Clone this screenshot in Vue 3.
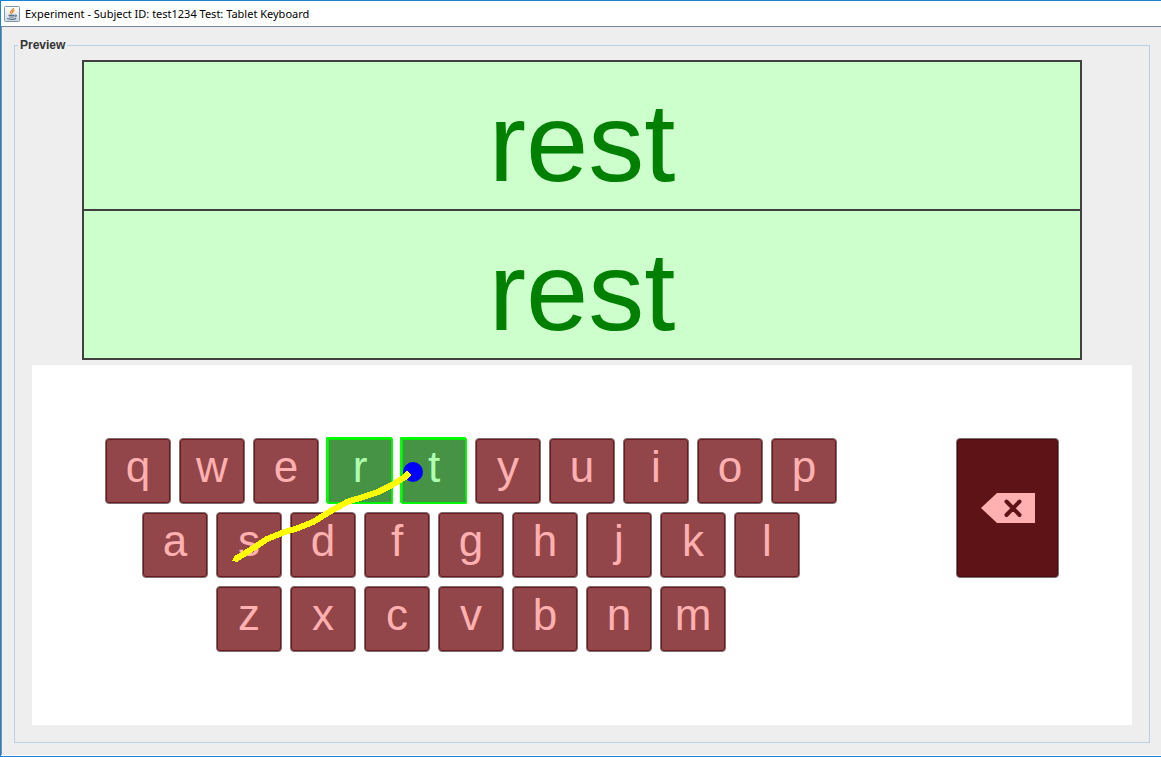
<script setup>
const phrases = [
  { id: 'target', label: 'Target word', text: 'rest' },
  { id: 'typed', label: 'Typed word', text: 'rest' },
]
const rows = ['qwertyuiop', 'asdfghjkl', 'zxcvbnm'].map((r) => r.split(''))
const active = ['r', 't']
</script>

<template>
  <div class="window">
    <header class="titlebar">
      <svg class="java" viewBox="0 0 16 16" aria-hidden="true">
        <defs>
          <linearGradient id="tile" x1="0" y1="0" x2="0" y2="1">
            <stop offset="0" stop-color="#ffffff" />
            <stop offset="1" stop-color="#cfd8e0" />
          </linearGradient>
        </defs>
        <rect x=".5" y=".5" width="15" height="15" rx="1" fill="url(#tile)" stroke="#8196a8" />
        <path d="M9.5 2C9.5 4 6 4.6 6.5 6.5C6.7 7.3 7.5 7.8 7.6 8.4M10.5 4.4C8.6 5.2 8 6 8.8 7.2" fill="none" stroke="#e8882c" stroke-width="1.4" />
        <path d="M4.5 9.3H10.5M5 11H10M10.8 9.1C13 8.6 12.8 10.8 10.6 11M3.2 12.6C5 13.6 10.5 13.6 12.2 12.5" fill="none" stroke="#53718c" stroke-width="1.2" />
      </svg>
      <h1>Experiment - Subject ID: test1234 Test: Tablet Keyboard</h1>
    </header>
    <main class="body">
      <fieldset class="preview">
        <legend>Preview</legend>
        <div class="words">
          <output v-for="p in phrases" :key="p.id" class="word" :aria-label="p.label">{{ p.text }}</output>
        </div>
        <section class="board" aria-label="Tablet keyboard">
          <div class="letters">
            <div v-for="(row, i) in rows" :key="i" class="row" :class="'row-' + i">
              <button v-for="k in row" :key="k" type="button" class="key" :class="{ active: active.includes(k) }">{{ k }}</button>
            </div>
          </div>
          <button type="button" class="key erase" aria-label="Backspace">
            <svg viewBox="0 0 54 30" width="54" height="30" aria-hidden="true">
              <path d="M0 15L16 0H54V30H16Z" fill="#ffb0b0" />
              <path d="M25.5 8.5L38.5 22M38.5 8.5L25.5 22" stroke="#5e1416" stroke-width="4" stroke-linecap="round" />
            </svg>
          </button>
          <svg class="trace" viewBox="0 0 1100 360" width="1100" height="360" aria-hidden="true">
            <circle cx="381" cy="107" r="10" fill="#0000ff" />
            <path d="M204 194L223 182L235 174L250 168L266 163L281 157L299 146L315 137L331 132L346 127L360 120L373 112L377 108" fill="none" stroke="#ffff00" stroke-width="6" stroke-linejoin="round" shape-rendering="crispEdges" />
            <path d="M200 196L203 190L211 191L205 197Z" fill="#ffff00" shape-rendering="crispEdges" />
          </svg>
        </section>
      </fieldset>
    </main>
  </div>
</template>

<style>
body {
  margin: 0;
  background: #eeeeee;
}
</style>

<style scoped>
.window {
  box-sizing: border-box;
  min-height: 100vh;
  display: flex;
  flex-direction: column;
  border: 1px solid #1883d7;
  border-right: 0;
  background: #ffffff;
}
.titlebar {
  display: flex;
  align-items: center;
  gap: 5px;
  height: 25px;
  padding-left: 3px;
  border-bottom: 1px solid #758699;
}
.java {
  width: 16px;
  height: 16px;
}
h1 {
  margin: 0;
  font: 400 11px/16px "Noto Sans", sans-serif;
  color: #000000;
}
.body {
  flex: 1;
  display: flex;
  margin-bottom: 1px;
  padding: 12px 11px 12px 12px;
  border-left: 1px solid #8a8f96;
  background: #eeeeee;
}
.preview {
  flex: 1;
  min-width: 0;
  margin: 0;
  padding: 0 17px 17px;
  border: 1px solid #b8cfe5;
}
legend {
  margin-left: -14px;
  padding: 0 2px;
  font: 700 12px/13px "Liberation Sans", Arial, sans-serif;
  color: #333333;
}
.words {
  box-sizing: border-box;
  max-width: 1000px;
  margin: 8px auto 0;
  border: 2px solid #404040;
  background: #ccffcc;
}
.word {
  display: block;
  height: 147px;
  text-align: center;
  font: 112px/162px "Liberation Sans", Arial, sans-serif;
  color: #008000;
}
.word + .word {
  border-top: 2px solid #404040;
}
.board {
  position: relative;
  box-sizing: border-box;
  display: flex;
  justify-content: space-between;
  align-items: flex-start;
  max-width: 1100px;
  height: 360px;
  margin: 5px auto 0;
  padding: 73px 73px 0;
  background: #ffffff;
}
.letters {
  display: grid;
  gap: 8px;
}
.row {
  display: flex;
  gap: 8px;
}
.row-1 {
  padding-left: 37px;
}
.row-2 {
  padding-left: 111px;
}
.key {
  box-sizing: border-box;
  width: 66px;
  height: 66px;
  padding: 0 0 8px;
  border: 1px solid #7d7172;
  border-radius: 4px;
  box-shadow: inset 0 0 0 1px #6a1a1e;
  background: #934649;
  font: 44px/56px "Liberation Sans", Arial, sans-serif;
  text-align: center;
  color: #ffb0b0;
}
.key.active {
  border: 1px solid #00ff00;
  border-radius: 1px;
  box-shadow: -1px -1px 0 #00ff00, inset 0 0 0 1px #08e60c;
  background: #469346;
  color: #b0ffb0;
}
.key.erase {
  display: flex;
  justify-content: center;
  align-items: center;
  width: 103px;
  height: 140px;
  padding: 0;
  background: #5e1416;
  box-shadow: inset 0 0 0 1px #4a0a0e;
}
.trace {
  position: absolute;
  left: 0;
  top: 0;
  pointer-events: none;
}
</style>
